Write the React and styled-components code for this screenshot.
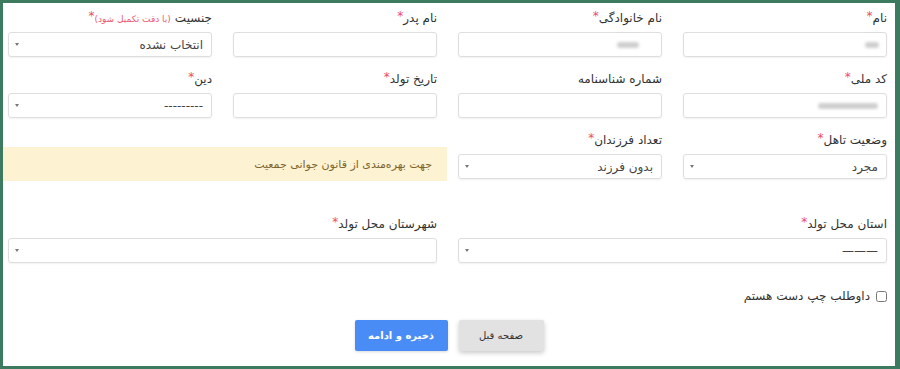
import styled, { createGlobalStyle } from "styled-components";

const GlobalStyle = createGlobalStyle`
    html, body {
        margin: 0;
        padding: 0;
        background: #ffffff;
    }
    * {
        box-sizing: border-box;
    }
`

const Frame = styled.div`
    width: 900px;
    height: 369px;
    border-style: solid;
    border-color: #3d7b61;
    border-width: 3px 5px 3px 3px;
    background: #ffffff;
    direction: rtl;
    padding: 7px 8px 0 5px;
    font-family: "DejaVu Sans", sans-serif;
    color: #333333;
`

const Row = styled.div`
    display: grid;
    grid-template-columns: repeat(4, 204px);
    column-gap: 21px;
    margin-top: ${(p) => p.$top || 0}px;
`

const Field = styled.div`
    grid-column: span ${(p) => p.$span || 1};
    display: flex;
    flex-direction: column;
`

const Label = styled.label`
    height: 16px;
    line-height: 16px;
    font-size: 12px;
    margin-bottom: 6px;
    white-space: nowrap;
`

const Star = styled.span`
    color: #ee4b62;
    font-size: 12px;
    position: relative;
    top: -2px;
`

const Hint = styled.span`
    color: #ec5a72;
    font-size: 9px;
    margin-right: 4px;
`

const Input = styled.div`
    height: 25px;
    border: 1px solid #dedede;
    border-radius: 3px;
    box-shadow: 0 1px 2px rgba(0, 0, 0, 0.06);
    display: flex;
    align-items: center;
    padding: 0 8px;
`

const Blur = styled.span`
    display: block;
    width: ${(p) => p.$w}px;
    height: 6px;
    margin-right: ${(p) => p.$off || 0}px;
    border-radius: 3px;
    background: #cfcfcf;
    filter: blur(1.5px);
`

const Select = styled(Input)`
    justify-content: space-between;
    font-size: 12px;
    color: #444444;
`

const Caret = styled.span`
    width: 0;
    height: 0;
    border-left: 2px solid transparent;
    border-right: 2px solid transparent;
    border-top: 3px solid #777777;
    margin-left: -2px;
`

const Alert = styled.div`
    grid-column: span 2;
    margin: 15px -10px 0 -5px;
    height: 34px;
    background: #fdf2d1;
    color: #7d6530;
    font-size: 11px;
    display: flex;
    align-items: center;
    padding: 0 15px;
`

const CheckRow = styled.label`
    margin-top: 25px;
    height: 16px;
    display: flex;
    align-items: center;
    gap: 6px;
    font-size: 12px;
`

const Check = styled.input`
    width: 11px;
    height: 11px;
    margin: 0;
`

const Buttons = styled.div`
    margin-top: 16px;
    display: flex;
    justify-content: center;
    gap: 11px;
    padding-left: 3px;
`

const Button = styled.button`
    height: 31px;
    width: ${(p) => p.$w}px;
    border: none;
    border-radius: 2px;
    font-family: "DejaVu Sans", sans-serif;
    font-size: 10px;
    font-weight: ${(p) => (p.$primary ? "bold" : "normal")};
    background: ${(p) => (p.$primary ? "#4a8cf5" : "#e2e2e2")};
    color: ${(p) => (p.$primary ? "#ffffff" : "#333333")};
    box-shadow: ${(p) => (p.$primary ? "0 1px 3px rgba(0,0,0,0.15)" : "0 2px 5px rgba(0,0,0,0.22)")};
`

function Req({ children, hint }) {
    return (
        <Label>
            {children}
            {hint && <Hint>(با دقت تکمیل شود)</Hint>}
            <Star>*</Star>
        </Label>
    )
}

function SelectBox({ value }) {
    return (
        <Select>
            <span>{value}</span>
            <Caret />
        </Select>
    )
}

export default function App() {
    return (
        <>
            <GlobalStyle />
            <Frame>
                <Row>
                    <Field>
                        <Req>نام</Req>
                        <Input><Blur $w={14} $off={-1} /></Input>
                    </Field>
                    <Field>
                        <Req>نام خانوادگی</Req>
                        <Input><Blur $w={22} $off={14} /></Input>
                    </Field>
                    <Field>
                        <Req>نام پدر</Req>
                        <Input />
                    </Field>
                    <Field>
                        <Req hint>جنسیت</Req>
                        <SelectBox value="انتخاب نشده" />
                    </Field>
                </Row>
                <Row $top={14}>
                    <Field>
                        <Req>کد ملی</Req>
                        <Input><Blur $w={60} /></Input>
                    </Field>
                    <Field>
                        <Label>شماره شناسنامه</Label>
                        <Input />
                    </Field>
                    <Field>
                        <Req>تاریخ تولد</Req>
                        <Input />
                    </Field>
                    <Field>
                        <Req>دین</Req>
                        <SelectBox value="---------" />
                    </Field>
                </Row>
                <Row $top={14}>
                    <Field>
                        <Req>وضعیت تاهل</Req>
                        <SelectBox value="مجرد" />
                    </Field>
                    <Field>
                        <Req>تعداد فرزندان</Req>
                        <SelectBox value="بدون فرزند" />
                    </Field>
                    <Alert>جهت بهره‌مندی از قانون جوانی جمعیت</Alert>
                </Row>
                <Row $top={35}>
                    <Field $span={2}>
                        <Req>استان محل تولد</Req>
                        <SelectBox value="———" />
                    </Field>
                    <Field $span={2}>
                        <Req>شهرستان محل تولد</Req>
                        <SelectBox value="" />
                    </Field>
                </Row>
                <CheckRow>
                    <Check type="checkbox" />
                    داوطلب چپ دست هستم
                </CheckRow>
                <Buttons>
                    <Button $w={85}>صفحه قبل</Button>
                    <Button $w={93} $primary>ذخیره و ادامه</Button>
                </Buttons>
            </Frame>
        </>
    )
}
